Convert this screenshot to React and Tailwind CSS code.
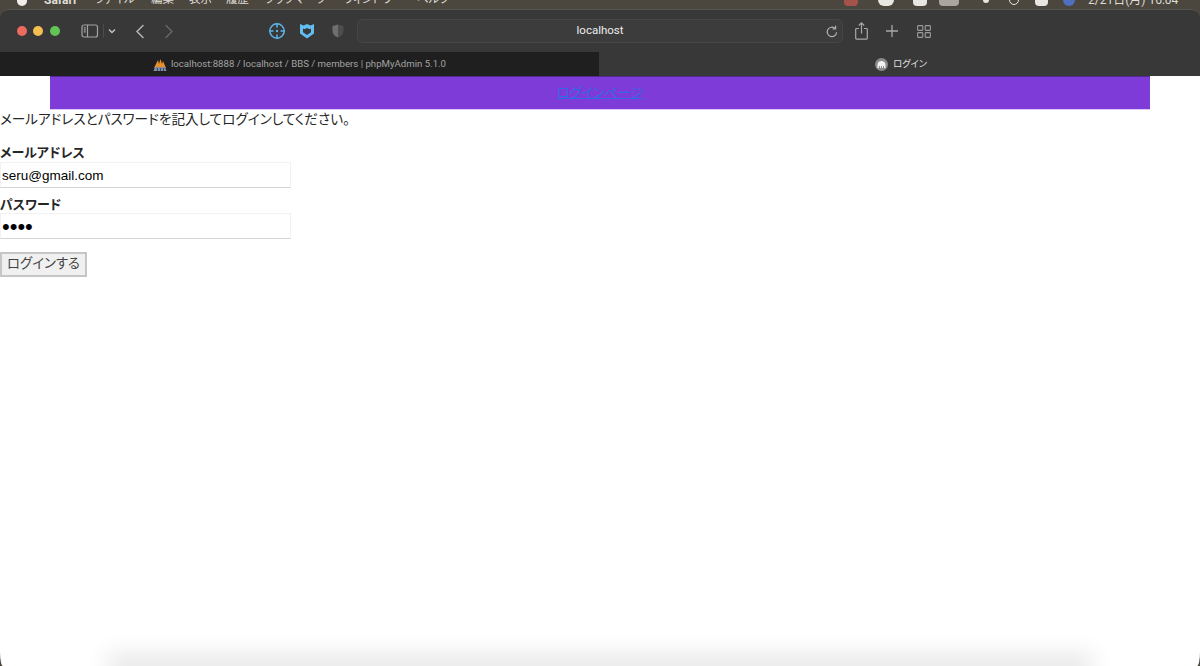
import React from "react";

const jp = "font-['Liberation_Sans','Noto_Sans_CJK_JP',sans-serif]";
const ui = "font-['Roboto','Noto_Sans_CJK_JP',sans-serif]";
const palt = "[font-feature-settings:'palt']";

function MenuBar() {
  return (
    <div className={`h-[9px] shrink-0 overflow-hidden bg-[#4c473e] text-[#dedcd6] text-[11.5px] ${palt} ${ui}`}>
      <div className="-mt-[9px] flex h-[18px] items-center whitespace-nowrap pl-[17px] pr-[17px]">
        <span className="h-[12px] w-[10px] rounded-full bg-[#f0eeea]" />
        <span className="ml-[17px] w-[51px] text-[12px] font-bold">Safari</span>
        <span className="w-[56px]">ファイル</span>
        <span className="w-[38px]">編集</span>
        <span className="w-[37px]">表示</span>
        <span className="w-[39px]">履歴</span>
        <span className="w-[78px]">ブックマーク</span>
        <span className="w-[74px]">ウィンドウ</span>
        <span>ヘルプ</span>
        <span className="ml-auto flex items-center">
          <span className="h-[12px] w-[14px] rounded-sm bg-[#a5524a]" />
          <span className="ml-[20px] h-[12px] w-[16px] rounded-full bg-[#e8e6e0]" />
          <span className="ml-[19px] h-[12px] w-[14px] rounded-sm bg-[#e8e6e0]" />
          <span className="ml-[12px] h-[12px] w-[20px] rounded-sm bg-[#a9a69f]" />
          <span className="ml-[24px] h-[6px] w-[6px] rounded-full bg-[#e8e6e0]" />
          <span className="ml-[20px] h-[10px] w-[10px] rounded-full border border-[#e8e6e0]" />
          <span className="ml-[16px] h-[12px] w-[13px] rounded-sm bg-[#e8e6e0]" />
          <span className="ml-[15px] h-[12px] w-[12px] rounded-full bg-[#4f6fc0]" />
          <span className="ml-[13px] w-[95px] text-[12px]">2/21日(月) 16:04</span>
        </span>
      </div>
    </div>
  );
}

function Toolbar() {
  return (
    <div className="flex h-[42px] shrink-0 items-center">
      <div className="ml-[16.5px] flex gap-[6.7px]">
        <span className="h-[10px] w-[10px] rounded-full bg-[#ec6a5e]" />
        <span className="h-[10px] w-[10px] rounded-full bg-[#f4bf4f]" />
        <span className="h-[10px] w-[10px] rounded-full bg-[#61c554]" />
      </div>
      <svg className="ml-[21px]" width="18" height="14" viewBox="0 0 18 14" fill="none" stroke="#a3a3a3" strokeWidth="1.2">
        <rect x="1" y="1" width="15.5" height="12" rx="2" />
        <path d="M6.5 1v12M2.8 3.8h2M2.8 5.8h2M2.8 7.8h2" />
      </svg>
      <span className="ml-[4px] h-[14px] w-px bg-[#4c4c4c]" />
      <svg className="ml-[4px]" width="8" height="6" viewBox="0 0 8 6" fill="none" stroke="#c4c4c4" strokeWidth="1.4">
        <path d="M1 1.5l3 3 3-3" />
      </svg>
      <svg className="ml-[19px]" width="10" height="15" viewBox="0 0 10 15" fill="none" stroke="#b5b5b5" strokeWidth="1.5" strokeLinecap="round">
        <path d="M8 1.5L2 7.5l6 6" />
      </svg>
      <svg className="ml-[19.5px]" width="10" height="15" viewBox="0 0 10 15" fill="none" stroke="#666666" strokeWidth="1.5" strokeLinecap="round">
        <path d="M2 1.5l6 6-6 6" />
      </svg>
      <svg className="ml-[94px]" width="18" height="18" viewBox="0 0 18 18" fill="none" stroke="#5eb3ea" strokeWidth="1.5">
        <circle cx="9" cy="9" r="7.2" />
        <path d="M9 1v4.5M9 12.5V17M1 9h4.5M12.5 9H17" />
        <circle cx="9" cy="9" r="1.2" fill="#5eb3ea" stroke="none" />
      </svg>
      <svg className="ml-[13.7px]" width="14" height="16" viewBox="0 0 14 16">
        <path fillRule="evenodd" fill="#62bdf0" d="M0 1l3.5 1.6L7 1l3.5 1.6L14 1v9.5L7 15.5 0 10.5zM3 5.5v3.7l4 2.9 4-2.9V5.5L9.6 6.2 7 5 4.4 6.2z" />
      </svg>
      <svg className="ml-[18px]" width="12" height="14" viewBox="0 0 12 14">
        <path fill="#6f6f6f" d="M6 .5L.5 2v5c0 3.2 2.4 5.4 5.5 6.5z" />
        <path fill="#4e4e4e" d="M6 .5L11.5 2v5c0 3.2-2.4 5.4-5.5 6.5z" />
      </svg>
      <div className={`ml-[13px] flex h-[24px] w-[486px] items-center rounded-[6px] border border-[#474747] bg-[#3c3c3c] pl-[16px] pr-[4px] ${ui}`}>
        <span className="flex-1 text-center text-[11.5px] text-[#ececec]">localhost</span>
        <svg width="12" height="13" viewBox="0 0 12 13" fill="none" stroke="#b0b0b0" strokeWidth="1.2">
          <path d="M10.6 7.2a4.7 4.7 0 1 1-1.6-3.9" />
          <path d="M9.6 0.8v3H6.6" />
        </svg>
      </div>
      <svg className="ml-[12px]" width="13" height="18" viewBox="0 0 13 18" fill="none" stroke="#a8a8a8" strokeWidth="1.2">
        <path d="M4 6.5H1.5a.8.8 0 0 0-.8.8v9a.8.8 0 0 0 .8.8h10a.8.8 0 0 0 .8-.8v-9a.8.8 0 0 0-.8-.8H9" />
        <path d="M6.5 11.5V1M3.8 3.5L6.5 .9l2.7 2.6" />
      </svg>
      <svg className="ml-[18px]" width="12" height="12" viewBox="0 0 12 12" fill="none" stroke="#a8a8a8" strokeWidth="1.3">
        <path d="M6 0v12M0 6h12" />
      </svg>
      <svg className="ml-[19px]" width="14" height="13" viewBox="0 0 14 13" fill="none" stroke="#9a9a9a" strokeWidth="1.1">
        <rect x=".6" y=".6" width="5.2" height="4.8" rx=".8" />
        <rect x="8.2" y=".6" width="5.2" height="4.8" rx=".8" />
        <rect x=".6" y="7.6" width="5.2" height="4.8" rx=".8" />
        <rect x="8.2" y="7.6" width="5.2" height="4.8" rx=".8" />
      </svg>
    </div>
  );
}

function Tabs() {
  return (
    <div className={`flex h-[24px] shrink-0 ${ui}`}>
      <div className="flex w-[599px] items-center bg-[#1f1f1f] pl-[153px] text-[9.65px] text-[#a3a3a3]">
        <svg width="14" height="13" viewBox="0 0 14 13">
          <path fill="#e8912c" d="M1 10L5 2l1 4 1.5-5L9 6l1-3 3 7z" />
          <path fill="#7d8aa8" d="M.5 13L2 9h10l1.5 4z" />
          <path fill="#3f4a66" d="M4 10h1v3H4zM7 10h1v3H7zM10 10h1v3h-1z" />
        </svg>
        <span className="ml-[4px] whitespace-nowrap">localhost:8888 / localhost / BBS / members | phpMyAdmin 5.1.0</span>
      </div>
      <div className={`flex flex-1 items-center justify-center gap-[5px] bg-[#383838] pl-[3px] text-[9.3px] text-[#e0e0e0] ${palt}`}>
        <svg width="13" height="13" viewBox="0 0 13 13">
          <circle cx="6.5" cy="6.5" r="6.5" fill="#8a8a8a" />
          <path fill="#f2f2f2" d="M2.5 7c0-2.4 1.8-4 4-4s4 1.6 4 4v3H9V8H8v2H7V8H6v2H5V8H4v2H2.5z" />
        </svg>
        <span>ログイン</span>
      </div>
    </div>
  );
}

export default function App() {
  return (
    <div className="flex h-[666px] w-[1200px] flex-col overflow-hidden bg-[#4c473e]">
      <MenuBar />
      <div className="flex h-[67px] shrink-0 flex-col rounded-t-[9px] border-t border-[#555] bg-[#383838]">
        <Toolbar />
        <Tabs />
      </div>
      <main className={`flex min-h-0 flex-1 flex-col overflow-hidden rounded-bl-[3px_14px] rounded-br-[3px_14px] bg-white text-[#262626] text-[13px] ${palt} ${jp}`}>
        <header className="mx-[50px] flex h-[34px] shrink-0 items-center justify-center border-t border-[#4f2e8f] bg-[#7e3bd8] border-b border-b-[#dcc9f5]">
          <a href="#" className="text-[#2f6ae8] underline">ログインページ</a>
        </header>
        <p className="mt-px text-[13.6px] leading-[18px]">メールアドレスとパスワードを記入してログインしてください。</p>
        <form className="mt-[15px] flex flex-col">
          <label className="font-bold leading-[18px]">メールアドレス</label>
          <input
            readOnly
            type="text"
            value="seru@gmail.com"
            className="h-[26px] w-[291px] border border-[#f2f2f2] border-b-[#d4d4d4] bg-white px-px text-[13.5px] text-black outline-none"
          />
          <label className="mt-[8px] font-bold leading-[17px]">パスワード</label>
          <input
            readOnly
            type="password"
            value="seru"
            className="h-[26px] w-[291px] border border-[#f2f2f2] border-b-[#d4d4d4] bg-white px-px text-[22px] text-black outline-none"
          />
          <button
            type="button"
            className="mt-[13px] h-[25px] w-[87px] border-2 border-[#c6c6c6] bg-[#f0f0f0] text-[13.4px] text-[#444]"
          >
            ログインする
          </button>
        </form>
        <div className="mx-[118px] mt-auto h-0 shrink-0 shadow-[0_0_25px_10px_rgba(0,0,0,0.12)]" />
      </main>
    </div>
  );
}
